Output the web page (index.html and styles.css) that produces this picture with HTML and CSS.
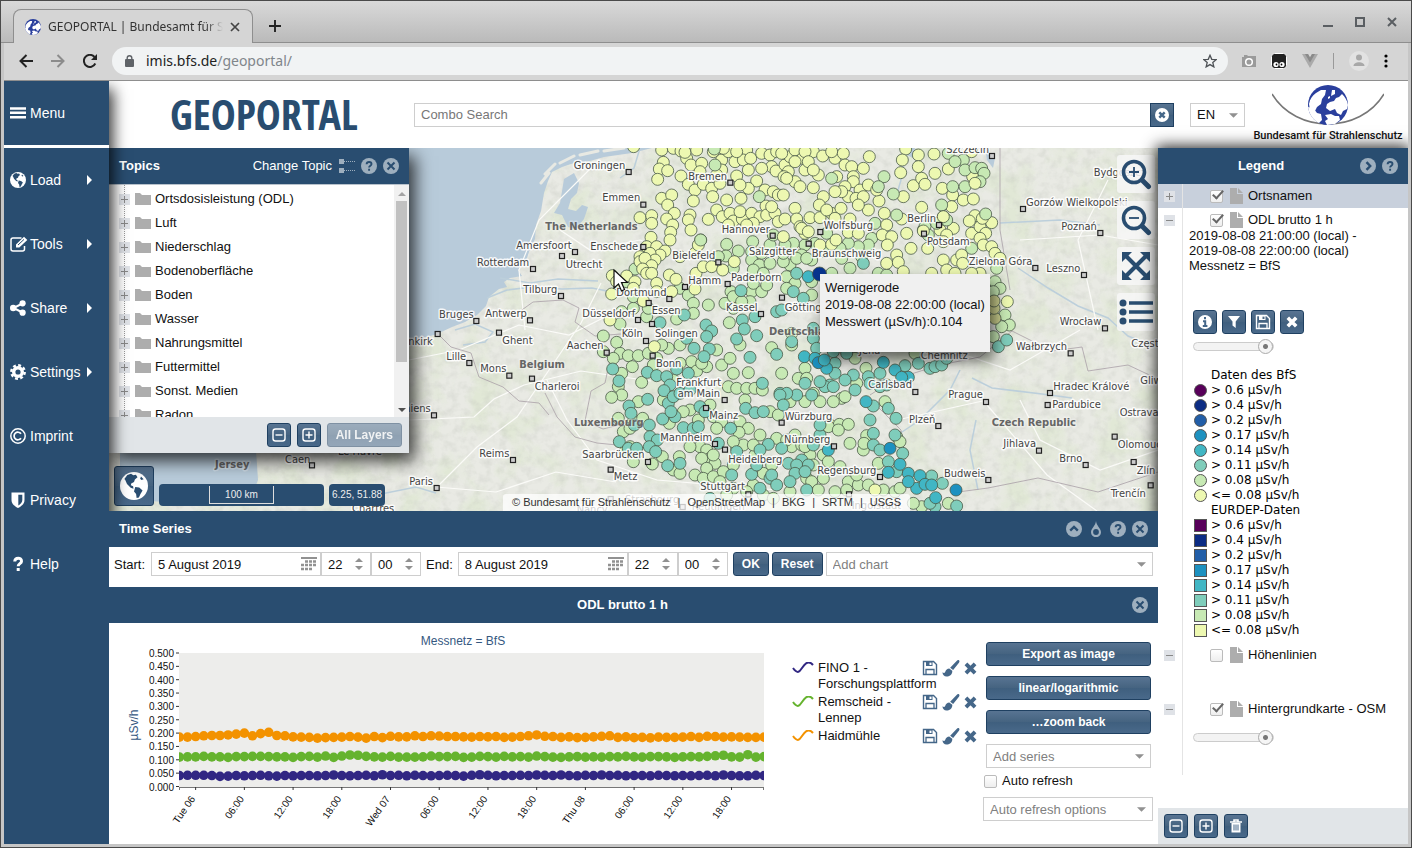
FILE: index.html
```html
<!DOCTYPE html>
<html lang="en">
<head>
<meta charset="utf-8">
<title>GEOPORTAL | Bundesamt für Strahlenschutz</title>
<link rel="stylesheet" href="styles.css">
</head>
<body>
<svg class="defs" aria-hidden="true">
  <symbol id="i-close" viewBox="0 0 16 16"><circle cx="8" cy="8" r="8" fill="#9eafbe"/><path d="M4.500 4.500l7 7M11.500 4.500l-7 7" stroke="#294d70" stroke-width="2"/></symbol>
  <symbol id="i-help" viewBox="0 0 16 16"><circle cx="8" cy="8" r="8" fill="#9eafbe"/><path d="M5.600 6.200c.2-3 4.900-2.800 4.900-.2 0 1.700-2.400 1.700-2.400 3.600M8.100 10.800v2" fill="none" stroke="#294d70" stroke-width="1.900"/></symbol>
  <symbol id="i-right" viewBox="0 0 16 16"><circle cx="8" cy="8" r="8" fill="#9eafbe"/><path d="M6.500 4.200L10.200 8l-3.700 3.800" fill="none" stroke="#294d70" stroke-width="2.400"/></symbol>
  <symbol id="i-up" viewBox="0 0 16 16"><circle cx="8" cy="8" r="8" fill="#9eafbe"/><path d="M4.200 9.600L8 6l3.800 3.600" fill="none" stroke="#294d70" stroke-width="2.400"/></symbol>
  <symbol id="i-drop" viewBox="0 0 16 16"><path d="M8 0C7.700 4.500 3 7.500 3 11.200a5 5 0 0 0 10 0C13 7.500 8.300 4.500 8 0z" fill="#9eafbe"/><circle cx="8" cy="11" r="2.900" fill="#294d70"/></symbol>
  <symbol id="i-minus" viewBox="0 0 16 16"><rect x="2" y="2" width="12" height="12" rx="2.500" fill="none" stroke="currentColor" stroke-width="1.400"/><path d="M4.500 8h7" stroke="currentColor" stroke-width="1.400"/></symbol>
  <symbol id="i-plus" viewBox="0 0 16 16"><rect x="2" y="2" width="12" height="12" rx="2.500" fill="none" stroke="currentColor" stroke-width="1.400"/><path d="M4.500 8h7M8 4.500v7" stroke="currentColor" stroke-width="1.400"/></symbol>
  <symbol id="i-save" viewBox="0 0 16 16"><path d="M1.500 1.500h10l3 3v10h-13z" fill="none" stroke="currentColor" stroke-width="1.400"/><path d="M4 1.500h6.500V6H4zM7.500 2.500v2.500h2V2.500z" fill="currentColor" fill-rule="evenodd"/><path d="M4 14.500v-5h8v5" fill="none" stroke="currentColor" stroke-width="1.300"/></symbol>
  <symbol id="i-brush" viewBox="0 0 16 16"><path d="M15.500.3c.7.600.5 1.400 0 2.200L10 9.300 7.200 7.200 13.300.9c.7-.7 1.500-1.100 2.200-.6zM6.400 8l2.800 2.200c.3 3.500-2.600 5.400-5.400 5.400C1.500 15.600 0 14 0 11.600c1.200.8 2 .8 2.500-.4C3.200 9.300 4.500 8 6.400 8z" fill="currentColor"/></symbol>
  <symbol id="i-x" viewBox="0 0 12 12"><path d="M1.800 1.800l8.400 8.400M10.200 1.800l-8.400 8.400" stroke="currentColor" stroke-width="3.600"/></symbol>
  <symbol id="i-globe" viewBox="0 0 16 16"><circle cx="8" cy="8" r="8" fill="#fff"/><path d="M4.200 1.700L6.300 1l1.300.8 1.500-.3.9 1.500-1.500 1.300-.5 1.400-1.600.8-.2 1.100 1.300.6.2 1.300-1.600-.5L4 6.800 3 4.600 2.500 4zM8.700 8.600l2.300.3 1.900 1.700-1.200 2-.9 2-1.300.3-.3-2.300-1.200-1.500zM12 2.500l1.500 1.600-1.200.5-.8-.8z" fill="#294d70"/></symbol>
  <symbol id="i-folder" viewBox="0 0 16 12"><path d="M0 0h5l2 2h9v10H0z" fill="#adadad"/></symbol>
  <symbol id="i-file" viewBox="0 0 13 16"><path d="M0 0h7v6h6v10H0z" fill="#adadad"/><path d="M8 0l5 5H8z" fill="#adadad"/></symbol>
  <symbol id="i-down" viewBox="0 0 8 4"><path d="M0 0h8L4 4z" fill="#919191"/></symbol>
  <symbol id="i-spin" viewBox="0 0 8 14"><path d="M0 5l4-4 4 4zM0 9h8l-4 4z" fill="#919191"/></symbol>
  <symbol id="i-cal" viewBox="0 0 16 14"><path d="M0 0h16v2H0z" fill="#919191"/><path d="M4 4.500h12M0 8h16M0 12h12" stroke="#919191" stroke-width="2.600" stroke-dasharray="3 1"/></symbol>
  <symbol id="i-arrow" viewBox="0 0 5 10"><path d="M0 0l5 5-5 5z" fill="#fff"/></symbol>
  <symbol id="i-bfs" viewBox="0 0 40 40"><circle cx="20" cy="20" r="20" fill="#2a3f9d"/><path d="M8 8l5-3 5 0-1 5-3 4-1 5-4 3-2 4-5-1-1-6c1-5 3-8 7-11zM0 22l6 2 3 4 4 1 1 6-3 3C5 35 1 29 0 22zM22 17l4-1 2-3 3-1 3-3c3 3 5 6 6 11l-1 4-4 2-2 4-4-2-2-4-5 2-4-3 1-4zM17 30l6-1 4 2 4 0 1 4-5 4-8 1-2-4 3-2zM24 5l3 0 0 4-4 2zM20 12l2-1 0 2-2 1z" fill="#fff"/></symbol>
</svg>

<div class="window">
  <div class="tabstrip">
    <div class="tab">
      <svg class="favicon"><use href="#i-bfs"/></svg>
      <span class="tab-title">GEOPORTAL | Bundesamt für Strahlenschutz</span>
      <button class="plain" aria-label="Close tab"><svg width="10" height="10" viewBox="0 0 10 10"><path d="M1 1l8 8M9 1L1 9" stroke="#444" stroke-width="1.700"/></svg></button>
    </div>
    <button class="plain new-tab" aria-label="New tab"><svg width="12" height="12" viewBox="0 0 12 12"><path d="M6 0v12M0 6h12" stroke="#222" stroke-width="1.900"/></svg></button>
    <div class="win-controls">
      <button class="plain" aria-label="Minimize"><svg width="10" height="10" viewBox="0 0 10 10"><path d="M0 9h10" stroke="#5a5e62" stroke-width="2"/></svg></button>
      <button class="plain" aria-label="Maximize"><svg width="10" height="10" viewBox="0 0 10 10"><rect x="1" y="1" width="8" height="8" fill="none" stroke="#5a5e62" stroke-width="2"/></svg></button>
      <button class="plain" aria-label="Close window"><svg width="10" height="10" viewBox="0 0 10 10"><path d="M1 1l8 8M9 1L1 9" stroke="#5a5e62" stroke-width="2"/></svg></button>
    </div>
  </div>
  <div class="navbar">
    <button class="plain" aria-label="Back"><svg width="14" height="14" viewBox="0 0 14 14"><path d="M14 7H1.500M7.500 1L1.500 7l6 6" fill="none" stroke="#222" stroke-width="2"/></svg></button>
    <button class="plain" aria-label="Forward"><svg width="14" height="14" viewBox="0 0 14 14"><path d="M0 7h12.500M6.500 1l6 6-6 6" fill="none" stroke="#8c8c8c" stroke-width="2"/></svg></button>
    <button class="plain" aria-label="Reload"><svg width="14" height="14" viewBox="0 0 14 14"><path d="M12.300 9.500A6 6 0 1 1 11.500 3" fill="none" stroke="#222" stroke-width="2"/><path d="M14 0v6H8z" fill="#222"/></svg></button>
    <div class="omnibox">
      <svg width="9" height="12" viewBox="0 0 9 12"><rect y="4" width="9" height="8" rx="1" fill="#5f6368"/><path d="M2.200 5V3a2.300 2.300 0 0 1 4.600 0v2" fill="none" stroke="#5f6368" stroke-width="1.400"/></svg>
      <span class="url">imis.bfs.de<span class="path">/geoportal/</span></span>
      <svg width="14" height="14" viewBox="0 0 16 16"><path d="M8 1.500l2 4.600 5 .4-3.800 3.300 1.200 4.900L8 12.100l-4.400 2.600 1.200-4.900L1 6.500l5-.4z" fill="none" stroke="#4d5156" stroke-width="1.500"/></svg>
    </div>
    <div class="extensions">
      <svg width="14" height="14" viewBox="0 0 14 14"><path d="M0 3h2V1h3l1 1h8v11H0z" fill="#9a9a9a"/><circle cx="7" cy="8" r="3.300" fill="none" stroke="#fff" stroke-width="1.500"/></svg>
      <svg width="16" height="16" viewBox="0 0 16 16"><rect x=".5" y=".5" width="15" height="15" rx="3" fill="#222" stroke="#fff"/><circle cx="5" cy="11.500" r="2.600" fill="#fff"/><circle cx="11" cy="11.500" r="2.600" fill="#fff"/><circle cx="5.500" cy="11.500" r=".9"/><circle cx="10.500" cy="11.500" r=".9"/></svg>
      <svg width="16" height="14" viewBox="0 0 16 14"><path d="M0 0h6l2 3.500L10 0h6L8 14z" fill="#aaa"/><path d="M3 0h3l2 3.500L10 0h3L8 8.500z" fill="#8a8a8a"/></svg>
      <span class="rule"></span>
      <svg width="20" height="20" viewBox="0 0 20 20"><circle cx="10" cy="10" r="10" fill="#e2e2e2"/><circle cx="10" cy="6.500" r="3" fill="#a8a8a8"/><path d="M4.500 15c0-5 11-5 11 0z" fill="#a8a8a8"/></svg>
      <button class="plain" aria-label="Browser menu"><svg width="4" height="14" viewBox="0 0 4 14"><circle cx="2" cy="2" r="1.600"/><circle cx="2" cy="7" r="1.600"/><circle cx="2" cy="12" r="1.600"/></svg></button>
    </div>
  </div>

  <div class="app">
    <nav class="sidebar">
      <button class="nav-item menu"><svg width="16" height="16" viewBox="0 0 16 16"><path d="M0 3.500h16M0 7.800h16M0 12.200h16" stroke="#fff" stroke-width="2.600"/></svg><span>Menu</span></button>
      <button class="nav-item"><svg width="16" height="16"><use href="#i-globe"/></svg><span>Load</span><svg class="sub"><use href="#i-arrow"/></svg></button>
      <button class="nav-item"><svg class="over" width="18" height="16" viewBox="0 0 18 16"><path d="M11.500 2H3a2 2 0 0 0-2 2v9a2 2 0 0 0 2 2h9.500a2 2 0 0 0 2-2v-3" fill="none" stroke="#fff" stroke-width="1.500"/><path d="M6 8.500L14 .8 17.300 4l-8 7.500H6z" fill="#fff"/><path d="M8 9l6-5.600" stroke="#294d70"/></svg><span>Tools</span><svg class="sub"><use href="#i-arrow"/></svg></button>
      <button class="nav-item"><svg width="16" height="16" viewBox="0 0 16 16"><path d="M12.500 3.500L3.500 8l9 4.500" fill="none" stroke="#fff" stroke-width="2"/><circle cx="12.600" cy="3.300" r="3.100" fill="#fff"/><circle cx="3.200" cy="8" r="3.200" fill="#fff"/><circle cx="12.600" cy="12.700" r="3.100" fill="#fff"/></svg><span>Share</span><svg class="sub"><use href="#i-arrow"/></svg></button>
      <button class="nav-item"><svg width="16" height="16" viewBox="0 0 16 16"><circle cx="8" cy="8" r="4.300" fill="none" stroke="#fff" stroke-width="3.400"/><circle cx="8" cy="8" r="6.700" fill="none" stroke="#fff" stroke-width="2.400" stroke-dasharray="2.900 2.360"/></svg><span>Settings</span><svg class="sub"><use href="#i-arrow"/></svg></button>
      <button class="nav-item"><svg width="16" height="16" viewBox="0 0 16 16"><circle cx="8" cy="8" r="7.200" fill="none" stroke="#fff" stroke-width="1.500"/><path d="M11 5.800A3.800 3.800 0 1 0 11 10.200" fill="none" stroke="#fff" stroke-width="1.700"/></svg><span>Imprint</span></button>
      <button class="nav-item"><svg width="16" height="16" viewBox="0 0 16 16"><path d="M1.500.5h13v7.500c0 4-3.500 6.500-6.500 8-3-1.500-6.500-4-6.500-8z" fill="#fff"/><path d="M8.300 2.700h4V8c0 2.500-2 4.300-4 5.400z" fill="#294d70"/></svg><span>Privacy</span></button>
      <button class="nav-item"><svg width="16" height="16" viewBox="0 0 16 16"><path d="M4.700 5.500C5 .9 11.600 1.200 11.500 5.200c0 2.500-3.300 2.400-3.300 5M8.200 12v3" fill="none" stroke="#fff" stroke-width="3"/></svg><span>Help</span></button>
    </nav>

    <header class="banner">
      <h1>GEOPORTAL</h1>
      <form class="search">
        <input type="text" placeholder="Combo Search" aria-label="Combo Search">
        <button type="button" class="btn square" aria-label="Clear search"><svg width="16" height="16" viewBox="0 0 16 16"><circle cx="8" cy="8" r="7" fill="#fff"/><path d="M5.300 5.300l5.400 5.400M10.700 5.300l-5.400 5.400" stroke="#456789" stroke-width="2.400"/></svg></button>
      </form>
      <div class="combo lang"><select aria-label="Language"><option>EN</option><option>DE</option></select><svg><use href="#i-down"/></svg></div>
      <div class="bfs">
        <svg width="112" height="42" viewBox="0 0 112 42"><path d="M0 9C24 49 88 49 112 9" fill="none" stroke="#777" stroke-width="1.500"/><use href="#i-bfs" x="36" y="0" width="40" height="40"/></svg>
        <p>Bundesamt für Strahlenschutz</p>
      </div>
    </header>

    <section class="map" aria-label="Map">
      <svg class="map-canvas" viewBox="109 148 1049 363" preserveAspectRatio="xMinYMin slice">
        <defs>
          <filter id="cover" x="0" y="0" width="100%" height="100%"><feTurbulence type="fractalNoise" baseFrequency=".03" numOctaves="5" seed="8"/><feColorMatrix values="0 0 0 0 .72  0 0 0 0 .8  0 0 0 0 .62  0 3.500 0 0 -1.500"/></filter>
          <filter id="relief" x="0" y="0" width="100%" height="100%"><feTurbulence type="fractalNoise" baseFrequency=".12" numOctaves="3" seed="3"/><feColorMatrix values="0 0 0 0 .55  0 0 0 0 .57  0 0 0 0 .52  0 2 0 0 -.85"/></filter>
        </defs>
        <rect x="109" y="148" width="1049" height="363" fill="#e9eae4"/>
        <rect x="109" y="148" width="1049" height="363" filter="url(#cover)" opacity=".6"/>
        <rect x="109" y="148" width="1049" height="363" filter="url(#relief)" opacity=".4"/>
        <g class="sea">
          <path d="M109 148H652l-20 5-28 4-14 4-16 2-12 4-10 5-4 9-4 12-3 18-5 14-1 14-5 10-4 12-8 9 4 6-12 2-6 4 3 5-8 2-10 8-3 9-9 9-12 7-13 5-15 7-14 4-20 6H109z"/>
          <path d="M574 173l5 10-2 10-6 6-3 10 8 2 6-6 6 2-4 12-8 10-8-2-6-12-8-2 6-10 2-12 2-12z"/>
          <path d="M120 450h136l2 30-8 20-40 5-60-4-30-6z"/>
          <path d="M985 148l10 10-2 10-6-8zM905 148h10l-2 10-8-4z"/>
        </g>
        <g class="islands"><path d="M545 174l10-10M560 163l14-7M580 155l18-4M604 151l20-3M541 183l8-10"/></g>
        <g class="rivers"><path d="M487 298l20-8 25-3 30 2 30-1 20 4M500 278l30 5 28-4 40 2M640 148l-6 20-14 10M455 330l20-6 18 8-8 10-22 3M905 150l-4 30-6 20M976 420l-6 30 8 40M960 370l-10 20-30 30-30 20M1158 348l-30-12-20-18-30-12-30-18-30-20M1100 225l-40-5-60 3M436 493l-20-6-40 8M1072 398l-30-4-50-6-20-10"/></g>
        <g class="roads"><path d="M409 420l65-3 20-18 30-14 57-14 70 10M437 487l40-40 40-30 30-44 34-50 20-40M409 360l50-10 60-25 50 10 60-30M547 380l20 40 30 40 60 20 120 10M560 230l30 20 50-10 50 20M436 487l60 5 60-20 60 10M525 330l-6-60 20-50 60-60M1020 240l80-5 58 10M1020 400l20 40 60 30 58-20M987 400l-90 20M987 405l60 70 50 36M1080 330l-70 40-60-20M1108 180l-30 60 20 90"/></g>
        <g class="borders"><path d="M519 312l14-10 30-2 16 8-4 14 20 14 26-2M437 333l14 14 20 6 8 24 24 10 16 14 20 2 10 12M611 355l-6 28-14 8-6 30 18 8 20-5M545 393l12 24 18 20 22 6 20 2M870 395l25-16 45-14 40-8 32-26M905 460l-4-30-30-30M958 492l30-4 50-10 60 14 60-20M1012 331l40 20 30-4 6 24 40-6 30 14M1010 290l-10-60 0-82"/></g>
        <g id="stations"></g>
        <g id="places"></g>
        <path d="M614 270v18l4.500-4 3 7 3-1.500-3-7h6z" fill="#fff" stroke="#111" stroke-width="1.200"/>
      </svg>

      <div class="map-tools">
        <button aria-label="Zoom in"><svg width="32" height="32" viewBox="0 0 32 32"><circle cx="14" cy="14" r="10.500" fill="none" stroke="#294d70" stroke-width="3.600"/><path d="M22 22l6.500 6.500" stroke="#294d70" stroke-width="5" stroke-linecap="round"/><path d="M9 14h10M14 9v10" stroke="#294d70" stroke-width="1.800"/></svg></button>
        <button aria-label="Zoom out"><svg width="32" height="32" viewBox="0 0 32 32"><circle cx="14" cy="14" r="10.500" fill="none" stroke="#294d70" stroke-width="3.600"/><path d="M22 22l6.500 6.500" stroke="#294d70" stroke-width="5" stroke-linecap="round"/><path d="M9 14h10" stroke="#294d70" stroke-width="1.800"/></svg></button>
        <button aria-label="Full extent"><svg width="32" height="32" viewBox="0 0 32 32"><path d="M6 6l20 20M26 6L6 26" stroke="#294d70" stroke-width="4"/><path d="M2 2h10L2 12zM30 2v10L20 2zM2 30V20l10 10zM30 30H20l10-10z" fill="#294d70"/></svg></button>
        <button aria-label="Legend"><svg width="34" height="32" viewBox="0 0 34 32"><path d="M10 7h24M10 16h24M10 25h24" stroke="#294d70" stroke-width="3.600"/><circle cx="4" cy="7" r="3.500" fill="#294d70"/><circle cx="4" cy="16" r="3.500" fill="#294d70"/><circle cx="4" cy="25" r="3.500" fill="#294d70"/></svg></button>
      </div>

      <div class="tooltip" role="tooltip">Wernigerode<br>2019-08-08 22:00:00 (local)<br>Messwert (µSv/h):0.104</div>
      <div class="attribution"><span>© Bundesamt für Strahlenschutz</span><span>|</span><span>OpenStreetMap</span><span>|</span><span>BKG</span><span>|</span><span>SRTM</span><span>|</span><span>USGS</span></div>
      <div class="map-status">
        <button class="btn globe-btn" aria-label="Whole world"><svg width="28" height="28"><use href="#i-globe"/></svg></button>
        <div class="chip scale"><span>100 km</span></div>
        <div class="chip">6.25, 51.88</div>
      </div>

      <section class="topics">
        <div class="panel-head">
          <h2>Topics</h2>
          <span class="change">Change Topic</span>
          <svg width="16" height="14" viewBox="0 0 16 14"><path d="M0 0h5v5H0zM0 9h5v5H0z" fill="#9eafbe"/><path d="M5 2.500h11M5 11.500h11" stroke="#9eafbe" stroke-dasharray="1 1"/></svg>
          <button class="plain tool" aria-label="Help"><svg><use href="#i-help"/></svg></button>
          <button class="plain tool" aria-label="Close"><svg><use href="#i-close"/></svg></button>
        </div>
        <div class="tree-wrap">
          <ul class="tree">
            <li><i></i><svg><use href="#i-folder"/></svg>Ortsdosisleistung (ODL)</li>
            <li><i></i><svg><use href="#i-folder"/></svg>Luft</li>
            <li><i></i><svg><use href="#i-folder"/></svg>Niederschlag</li>
            <li><i></i><svg><use href="#i-folder"/></svg>Bodenoberfläche</li>
            <li><i></i><svg><use href="#i-folder"/></svg>Boden</li>
            <li><i></i><svg><use href="#i-folder"/></svg>Wasser</li>
            <li><i></i><svg><use href="#i-folder"/></svg>Nahrungsmittel</li>
            <li><i></i><svg><use href="#i-folder"/></svg>Futtermittel</li>
            <li><i></i><svg><use href="#i-folder"/></svg>Sonst. Medien</li>
            <li><i></i><svg><use href="#i-folder"/></svg>Radon</li>
          </ul>
          <div class="scroll"><svg width="8" height="4" viewBox="0 0 8 4"><path d="M0 4h8L4 0z" fill="#a3a3a3"/></svg><b></b><svg width="8" height="4" viewBox="0 0 8 4"><path d="M0 0h8L4 4z" fill="#505050"/></svg></div>
        </div>
        <div class="panel-foot right">
          <button class="btn square" aria-label="Collapse all"><svg width="16" height="16"><use href="#i-minus"/></svg></button>
          <button class="btn square" aria-label="Expand all"><svg width="16" height="16"><use href="#i-plus"/></svg></button>
          <button class="btn" disabled>All Layers</button>
        </div>
      </section>
    </section>

    <section class="series">
      <div class="panel-head">
        <h2>Time Series</h2>
        <button class="plain tool" aria-label="Collapse"><svg><use href="#i-up"/></svg></button>
        <button class="plain tool" aria-label="Opacity"><svg><use href="#i-drop"/></svg></button>
        <button class="plain tool" aria-label="Help"><svg><use href="#i-help"/></svg></button>
        <button class="plain tool" aria-label="Close"><svg><use href="#i-close"/></svg></button>
      </div>
      <div class="range">
        <label for="start">Start:</label>
        <div class="fields">
          <div class="field date"><input id="start" type="text" value="5 August 2019"><svg width="16" height="14"><use href="#i-cal"/></svg></div>
          <div class="field num"><input type="text" value="22" aria-label="Start hour"><svg width="8" height="14"><use href="#i-spin"/></svg></div>
          <div class="field num"><input type="text" value="00" aria-label="Start minute"><svg width="8" height="14"><use href="#i-spin"/></svg></div>
        </div>
        <label for="end">End:</label>
        <div class="fields">
          <div class="field date"><input id="end" type="text" value="8 August 2019"><svg width="16" height="14"><use href="#i-cal"/></svg></div>
          <div class="field num"><input type="text" value="22" aria-label="End hour"><svg width="8" height="14"><use href="#i-spin"/></svg></div>
          <div class="field num"><input type="text" value="00" aria-label="End minute"><svg width="8" height="14"><use href="#i-spin"/></svg></div>
        </div>
        <button class="btn">OK</button>
        <button class="btn">Reset</button>
        <div class="combo hint grow"><select aria-label="Add chart"><option>Add chart</option></select><svg><use href="#i-down"/></svg></div>
      </div>
      <div class="panel-head centered">
        <h2>ODL brutto 1 h</h2>
        <button class="plain tool" aria-label="Close chart"><svg><use href="#i-close"/></svg></button>
      </div>
      <div class="chart-row">
        <svg class="chart" id="chart" viewBox="109 623 675 217" role="img" aria-label="Messnetz = BfS"></svg>
        <ul class="keys">
          <li><svg class="wave" viewBox="0 0 22 12"><path d="M1 6c5 7 7 3 9 0s6-9 11-3" fill="none" stroke="#312783" stroke-width="2"/></svg><span>FINO 1 - Forschungsplattform</span><button class="plain" aria-label="Save"><svg width="16" height="16"><use href="#i-save"/></svg></button><button class="plain" aria-label="Edit style"><svg width="18" height="17"><use href="#i-brush"/></svg></button><button class="plain" aria-label="Remove"><svg width="13" height="13"><use href="#i-x"/></svg></button></li>
          <li><svg class="wave" viewBox="0 0 22 12"><path d="M1 6c5 7 7 3 9 0s6-9 11-3" fill="none" stroke="#65b32e" stroke-width="2"/></svg><span>Remscheid - Lennep</span><button class="plain" aria-label="Save"><svg width="16" height="16"><use href="#i-save"/></svg></button><button class="plain" aria-label="Edit style"><svg width="18" height="17"><use href="#i-brush"/></svg></button><button class="plain" aria-label="Remove"><svg width="13" height="13"><use href="#i-x"/></svg></button></li>
          <li><svg class="wave" viewBox="0 0 22 12"><path d="M1 6c5 7 7 3 9 0s6-9 11-3" fill="none" stroke="#f39200" stroke-width="2"/></svg><span>Haidmühle</span><button class="plain" aria-label="Save"><svg width="16" height="16"><use href="#i-save"/></svg></button><button class="plain" aria-label="Edit style"><svg width="18" height="17"><use href="#i-brush"/></svg></button><button class="plain" aria-label="Remove"><svg width="13" height="13"><use href="#i-x"/></svg></button></li>
        </ul>
        <div class="actions">
          <button class="btn">Export as image</button>
          <button class="btn">linear/logarithmic</button>
          <button class="btn">…zoom back</button>
          <div class="combo hint"><select aria-label="Add series"><option>Add series</option></select><svg><use href="#i-down"/></svg></div>
          <label class="check"><input type="checkbox"> Auto refresh</label>
          <div class="combo hint wide"><select aria-label="Auto refresh options"><option>Auto refresh options</option></select><svg><use href="#i-down"/></svg></div>
        </div>
      </div>
    </section>

    <aside class="legend">
      <div class="panel-head centered">
        <h2>Legend</h2>
        <button class="plain tool" aria-label="Collapse"><svg><use href="#i-right"/></svg></button>
        <button class="plain tool" aria-label="Help"><svg><use href="#i-help"/></svg></button>
      </div>
      <div class="layers">
        <div class="layer selected"><i class="plus"></i><label><input type="checkbox" checked><svg><use href="#i-file"/></svg>Ortsnamen</label></div>
        <div class="layer"><i></i><label><input type="checkbox" checked><svg><use href="#i-file"/></svg>ODL brutto 1 h</label></div>
        <div class="details">
          <p>2019-08-08 21:00:00 (local) - 2019-08-08 22:00:00 (local)<br>Messnetz = BfS</p>
          <div class="layer-buttons">
            <button class="btn square" aria-label="Info"><svg width="16" height="16" viewBox="0 0 16 16"><circle cx="8" cy="8" r="7" fill="#fff"/><path d="M8 3v2.200M6 7.200h2.200V12M5.800 12h4.600" fill="none" stroke="#456789" stroke-width="2"/></svg></button>
            <button class="btn square" aria-label="Filter"><svg width="16" height="16" viewBox="0 0 16 16"><path d="M2 2h12L9.700 7.500V14L6.500 11.500v-4z" fill="#fff"/></svg></button>
            <button class="btn square" aria-label="Download"><svg width="16" height="16"><use href="#i-save"/></svg></button>
            <button class="btn square" aria-label="Remove layer"><svg width="12" height="12"><use href="#i-x"/></svg></button>
          </div>
          <input class="slider" type="range" value="100" aria-label="Opacity of ODL brutto 1 h">
          <ul class="classes">
            <li><span></span>Daten des BfS</li>
            <li><span class="dot c1"></span>&gt; 0.6 µSv/h</li>
            <li><span class="dot c2"></span>&gt; 0.4 µSv/h</li>
            <li><span class="dot c3"></span>&gt; 0.2 µSv/h</li>
            <li><span class="dot c4"></span>&gt; 0.17 µSv/h</li>
            <li><span class="dot c5"></span>&gt; 0.14 µSv/h</li>
            <li><span class="dot c6"></span>&gt; 0.11 µSv/h</li>
            <li><span class="dot c7"></span>&gt; 0.08 µSv/h</li>
            <li><span class="dot c8"></span>&lt;= 0.08 µSv/h</li>
            <li><span></span>EURDEP-Daten</li>
            <li><span class="box c1"></span>&gt; 0.6 µSv/h</li>
            <li><span class="box c2"></span>&gt; 0.4 µSv/h</li>
            <li><span class="box c3"></span>&gt; 0.2 µSv/h</li>
            <li><span class="box c4"></span>&gt; 0.17 µSv/h</li>
            <li><span class="box c5"></span>&gt; 0.14 µSv/h</li>
            <li><span class="box c6"></span>&gt; 0.11 µSv/h</li>
            <li><span class="box c7"></span>&gt; 0.08 µSv/h</li>
            <li><span class="box c8"></span>&lt;= 0.08 µSv/h</li>
          </ul>
        </div>
        <div class="layer spaced"><i></i><label><input type="checkbox"><svg><use href="#i-file"/></svg>Höhenlinien</label></div>
        <div class="layer"><i></i><label><input type="checkbox" checked><svg><use href="#i-file"/></svg>Hintergrundkarte - OSM</label></div>
        <div class="details last"><input class="slider" type="range" value="100" aria-label="Opacity of Hintergrundkarte"></div>
      </div>
      <div class="panel-foot">
        <button class="btn square" aria-label="Collapse all"><svg width="16" height="16"><use href="#i-minus"/></svg></button>
        <button class="btn square" aria-label="Expand all"><svg width="16" height="16"><use href="#i-plus"/></svg></button>
        <button class="btn square" aria-label="Remove all"><svg width="16" height="16" viewBox="0 0 16 16"><path d="M2 4h12M6 3.500V2h4v1.500" fill="none" stroke="#fff" stroke-width="1.600"/><path d="M3.500 5h9v9.500h-9z" fill="#fff"/><path d="M6 6.500v6M8 6.500v6M10 6.500v6" stroke="#456789"/></svg></button>
      </div>
    </aside>
  </div>
</div>
<script src="app.js"></script>
</body>
</html>
```
FILE: styles.css
```css
* { box-sizing: border-box; }
body { margin: 0; font: 13px/16px "Liberation Sans", Arial, sans-serif; color: #111; background: #4a4a4a; }
button, input, select { font: inherit; color: inherit; margin: 0; }
h1, h2, p, ul { margin: 0; padding: 0; }
ul { list-style: none; }
svg { display: block; flex: none; }
.defs { position: absolute; width: 0; height: 0; }
.plain { border: 0; padding: 0; background: none; display: block; flex: none; }

/* browser window */
.window { min-height: 100vh; display: flex; flex-direction: column; border: 1px solid #4a4a4a; background: #c6c6c6; }
.tabstrip { display: flex; align-items: center; height: 42px; padding: 0 10px 0 12px; background: linear-gradient(#d9d9d9, #bababa); border-bottom: 1px solid #8e8e8e; }
.tab { display: flex; align-items: center; align-self: flex-end; gap: 7px; width: 240px; height: 34px; margin-bottom: -1px; padding: 0 12px 0 11px; background: #d5d5d5; border: 1px solid #8e8e8e; border-bottom: 0; border-radius: 8px 8px 0 0; }
.favicon { width: 16px; height: 16px; }
.tab-title { flex: 1; overflow: hidden; white-space: nowrap; font: 12px/18px "Noto Sans", sans-serif; color: #333; -webkit-mask-image: linear-gradient(90deg, #000 90%, transparent); mask-image: linear-gradient(90deg, #000 90%, transparent); }
.new-tab { margin: 8px 0 0 16px; }
.win-controls { display: flex; gap: 22px; margin-left: auto; padding: 0 4px 0 0; }
.navbar { display: flex; align-items: center; gap: 18px; height: 38px; margin: 0 3px; padding: 0 20px 2px 15px; background: #d5d5d5; border-bottom: 1px solid #8e8e8e; }
.omnibox { flex: 1; display: flex; align-items: center; gap: 12px; height: 28px; margin-left: -3px; padding: 0 11px 0 13px; border-radius: 14px; background: #f1f3f4; font: 14px/20px "Noto Sans", sans-serif; color: #222; }
.extensions { display: flex; align-items: center; gap: 15px; margin-left: -4px; }
.url { flex: 1; }
.path { color: #80868b; }
.rule { width: 1px; height: 16px; background: #999; }

/* application frame */
.app { flex: 1; display: grid; grid-template: auto 1fr auto / 105px minmax(0, 1fr) 250px; margin: 0 3px 3px; background: #fff; overflow: hidden; }
.sidebar { grid-row: 1 / 4; position: relative; z-index: 3; background: #294d70; box-shadow: 4px 8px 14px rgba(0, 0, 0, .8); }
.nav-item { display: flex; align-items: center; width: 100%; height: 64px; padding: 0 17px 0 6px; border: 0; background: none; color: #fff; font-size: 14px; text-align: left; }
.nav-item.menu { height: 67px; border-bottom: 3px solid #fff; }
.nav-item span { flex: 1; }
.nav-item > svg:first-child { margin-right: 4px; }
.nav-item > svg.over { margin-right: 2px; }
.nav-item .sub { width: 5px; height: 10px; }

.banner { grid-column: 2 / 4; display: flex; align-items: center; height: 67px; padding: 0 7px 0 61px; }
h1 { width: 244px; padding-bottom: 2px; font: bold 42px/60px "Open Sans Condensed", "Noto Sans Condensed", "Roboto Condensed", "Open Sans", sans-serif; color: #294d70; }
.search { flex: 1; display: flex; }
.search input { flex: 1; height: 24px; padding: 0 6px; border: 1px solid #cecece; border-right: 0; }
.search input::placeholder { color: #777; opacity: 1; }
.lang { width: 55px; margin: 0 10px 0 16px; }
.bfs { width: 146px; height: 60px; display: flex; flex-direction: column; align-items: center; }
.bfs p { margin-top: 2px; font: 500 11px/14px Roboto, sans-serif; color: #111; white-space: nowrap; }

/* buttons and fields */
.btn { height: 24px; padding: 0 8px; display: flex; align-items: center; justify-content: center; border: 1px solid #1f4061; border-radius: 3px; background: linear-gradient(#587492, #456380 50%, #3f5f7e 51%, #49698a); color: #fff; font-weight: bold; font-size: 12px; line-height: 16px; white-space: nowrap; flex: none; }
.btn:disabled { opacity: .5; }
.btn.square { width: 24px; padding: 0; }
.search .btn { border-radius: 0; }
.combo { position: relative; }
.combo select { width: 100%; height: 24px; padding: 1px 20px 0 6px; border: 1px solid #cecece; border-radius: 0; background: #fff; appearance: none; display: block; }
.combo svg { position: absolute; right: 7px; top: 10px; width: 9px; height: 5px; pointer-events: none; }
.hint select { color: #808080; }
.grow { flex: 1; }
.fields { display: flex; }
.field { display: flex; align-items: center; height: 24px; border: 1px solid #cecece; padding-right: 7px; background: #fff; }
.field input { flex: 1; min-width: 0; border: 0; padding: 1px 0 0 6px; outline: 0; background: none; }
.date { width: 170px; padding-right: 3px; }
.num { width: 50px; }
input[type="checkbox"] { appearance: none; position: relative; width: 13px; height: 13px; flex: none; border: 1px solid #bbb; border-radius: 2px; background: linear-gradient(#fff, #eee); }
input[type="checkbox"]:checked::after { content: ""; position: absolute; left: 4px; top: -3px; width: 4px; height: 9px; border: solid #666; border-width: 0 2px 2px 0; transform: rotate(42deg); }

/* panels */
.panel-head { display: flex; align-items: center; gap: 6px; height: 36px; padding: 0 10px; background: #294d70; color: #fff; }
.panel-head h2 { flex: 1; font-size: 13px; line-height: 16px; }
.centered h2 { text-align: center; }
.tool svg { width: 16px; height: 16px; }
.panel-foot { display: flex; gap: 6px; align-items: center; height: 36px; padding: 0 7px 0 6px; background: #e1e5e8; }
.right { justify-content: flex-end; }

/* map */
.map { grid-column: 2; position: relative; min-height: 305px; overflow: hidden; }
.map-canvas { position: absolute; inset: 0; width: 100%; height: 100%; }
.sea { fill: #b8cbda; }
.islands path { fill: none; stroke: #e8e9e3; stroke-width: 3; stroke-linecap: round; }
.rivers path { fill: none; stroke: #bccfdb; stroke-width: 1.500; }
.roads path { fill: none; stroke: #fbfbf8; stroke-width: 1.200; }
.borders path { fill: none; stroke: #aaa0a8; stroke-width: 1; opacity: .8; }
.station { stroke: #4a5a48; stroke-width: .8; }
.place { font: 11px "DejaVu Sans Condensed", "Noto Sans", sans-serif; fill: #444; stroke: #fff; stroke-opacity: .85; stroke-width: 3; stroke-linejoin: round; paint-order: stroke; }
.country { font-weight: bold; fill: #666; stroke-opacity: .3; }
.town { fill: #ccc; stroke: #222; stroke-width: 1.200; }
.map-tools { position: absolute; top: 7px; right: 3px; display: grid; gap: 8px; }
.map-tools button { width: 38px; height: 38px; padding: 0; display: grid; place-items: center; border: 0; border-radius: 3px; background: rgba(247, 247, 247, .85); }
.tooltip { position: absolute; left: 711px; top: 126px; width: 170px; height: 78px; padding: 5px; line-height: 17px; background: #f0f0f0; box-shadow: 4px 8px 14px rgba(0, 0, 0, .6); white-space: nowrap; }
.attribution { position: absolute; left: 394px; bottom: 0; display: flex; gap: 7px; padding: 0 9px; font-size: 11px; line-height: 17px; color: #333; background: rgba(255, 255, 255, .75); border-radius: 3px 3px 0 0; white-space: nowrap; }
.map-status { position: absolute; left: 5px; bottom: 5px; display: flex; align-items: flex-end; gap: 5px; }
.globe-btn { width: 40px; height: 40px; padding: 0; }
.chip { height: 22px; padding: 0 3px; border-radius: 4px; background: #294d70; color: #eee; font-size: 10px; line-height: 22px; }
.scale { width: 165px; padding: 2px 50px; }
.scale span { display: block; height: 18px; border: 1px solid #ddd; border-top: 0; line-height: 17px; text-align: center; }

.topics { position: absolute; left: 0; top: 0; width: 300px; background: #fff; box-shadow: 6px 8px 16px rgba(0, 0, 0, .75); }
.topics .panel-head { height: 37px; border-bottom: 1px solid #b8c2cc; }
.change { margin-right: 1px; }
.tree-wrap { display: flex; height: 232px; overflow: hidden; }
.tree { flex: 1; padding: 2px 0 0 10px; background: repeating-linear-gradient(#999 0 1px, transparent 1px 2px) 15px 0 / 1px 100% no-repeat; }
.tree li { display: flex; align-items: center; height: 24px; }
.tree li svg { width: 16px; height: 12px; margin: 0 4px 0 5px; }
.tree i, .layer i { flex: none; width: 11px; height: 11px; background: linear-gradient(#888, #888) center / 7px 1px no-repeat, #dfe2e7; }
.tree i, .layer .plus { background: linear-gradient(#888, #888) center / 7px 1px no-repeat, linear-gradient(#888, #888) center / 1px 7px no-repeat, #dfe2e7; }
.scroll { width: 15px; display: flex; flex-direction: column; align-items: center; padding: 7px 0 5px; background: #f1f1f1; }
.scroll b { width: 11px; height: 161px; margin: 5px 0 auto; background: #c1c1c1; }

/* time series */
.series { grid-column: 2; position: relative; z-index: 4; background: #fff; }
.range { display: flex; align-items: center; gap: 5px; height: 40px; padding: 0 5px 6px; }
.range label { padding-top: 1px; }
.range .btn + .btn { margin-left: -2px; }
.range .hint { margin-left: -2px; }
.range label:first-child { margin-right: 1px; }
.chart-row { display: flex; height: 221px; }
.chart { flex: 1; min-width: 0; height: 217px; }
.chart text { font-size: 10px; fill: #111; }
.chart .title { font-size: 12px; fill: #35587f; }
.keys { width: 193px; padding: 37px 0 0 8px; }
.keys li { display: flex; align-items: flex-start; height: 34px; color: #111; }
.keys span { flex: 1; width: 88px; min-width: 0; }
.keys .wave { width: 22px; height: 12px; margin: 2px 4px 0 0; }
.keys .plain { color: #456789; margin-right: 4px; }
.keys .plain:last-child { margin: 2px 0 0; }
.actions { width: 181px; padding: 19px 7px 0 9px; display: flex; flex-direction: column; gap: 10px; }
.check { display: flex; align-items: center; gap: 5px; height: 16px; margin: -5px 0 -2px -2px; }
.wide { margin: 0 -2px 0 -3px; }

/* legend */
.legend { grid-column: 3; grid-row: 2 / 4; position: relative; z-index: 2; display: flex; flex-direction: column; background: #fff; box-shadow: 0 0 14px 2px rgba(0, 0, 0, .85); }
.layers { flex: 1; background: linear-gradient(#e4e4e4, #e4e4e4) 24px 0 / 1px 591px no-repeat; }
.layer { display: flex; align-items: center; height: 24px; padding-left: 6px; }
.layer label { display: flex; align-items: center; margin-left: 35px; }
.layer label svg { width: 13px; height: 16px; margin: 0 5px 0 7px; }
.selected { background: linear-gradient(#e4e4e4, #e4e4e4) 24px 0 / 1px 100% no-repeat, #c8d0dc; }
.spaced { margin-bottom: 30px; }
.details { padding: 0 20px 0 31px; }
.details p { line-height: 15px; margin-top: -4px; }
.layer-buttons { display: flex; gap: 5px; margin: 37px 0 5px 4px; }
.slider { appearance: none; display: block; width: 81px; height: 15px; margin: 0 0 0 4px; background: none; }
.slider::-webkit-slider-runnable-track { height: 9px; border: 1px solid #ccc; border-radius: 5px; background: #f3f3f3; }
.slider::-webkit-slider-thumb { appearance: none; width: 15px; height: 15px; margin-top: -4px; border: 1px solid #aaa; border-radius: 50%; background: radial-gradient(circle, #777 0 2px, #f5f5f5 3px); }
.classes { padding: 14px 0 5px 4px; font: 12px/15px "DejaVu Sans", sans-serif; color: #000; white-space: nowrap; }
.classes li { display: flex; align-items: center; height: 15px; gap: 4px; }
.classes span { flex: none; width: 13px; height: 13px; margin-left: 1px; }
.dot { border-radius: 50%; }
.dot, .box { border: 1px solid #555; }
.c1 { background: #58005a; } .c2 { background: #0c2c84; } .c3 { background: #225ea8; } .c4 { background: #1d91c0; }
.c5 { background: #41b6c4; } .c6 { background: #7fcdbb; } .c7 { background: #c7e9b4; } .c8 { background: #edf8b1; }
.last { padding-top: 9px; }
```
FILE: app.js
```js
const NS = 'http://www.w3.org/2000/svg';
function add(parent, tag, attrs, text) {
  const el = document.createElementNS(NS, tag);
  for (const k in attrs) el.setAttribute(k, attrs[k]);
  if (text !== undefined) el.textContent = text;
  parent.appendChild(el);
  return el;
}

// Map tiles: coordinates inside a tile are given in thirds of a map unit.
const WEST = [400, 145], EAST = [780, 145];
const at = (tile, x, y) => [tile[0] + x / 3, tile[1] + y / 3];

const stations = [
  [WEST, '#c7e9b4', '902,285 980,298 1015,318 978,333 1000,370 955,335 1058,290 1055,320 1085,325 1055,345 1078,360 1110,355 1060,375 1090,385 1110,300 1120,270 840,430 865,450 880,475 880,505 925,480 975,475 993,440 1000,455 1055,440 1050,470 1060,415 700,490 665,500 660,537 740,515 830,522 680,410 700,455 745,490 705,372 988,533 1000,490 1025,470 1085,440 1100,420 610,573 650,592 610,620 660,625 685,632 715,632 745,625 770,640 805,610 840,600 785,600 665,685 697,665 640,640 725,712 655,725 665,750 635,757 715,770 655,820 700,830 728,820 670,860 690,850 875,650 890,678 920,665 950,615 905,655 840,655 965,660 1000,685 1045,683 1115,608 985,725 1010,730 1040,730 1065,730 1087,735 1035,765 790,765 930,780 870,795 850,800 808,835 895,825 940,815 965,830 1020,830 1045,850 1017,862 1080,870 1110,800 1135,810 950,850 690,905 675,920 710,925 700,950 787,935 838,935 757,957 820,975 840,985 900,905 920,915 930,940 905,940 945,955 920,970 885,990 910,1000 940,995 940,930 1000,960 970,980 960,1010 1065,930 1130,880 1090,985 1115,960 1060,1020 1040,1040 1000,1030 980,1050 1090,1050 1120,1060 1010,910 1030,900 870,905 1060,900 1000,890 990,640 1020,600 820,705 760,660'],
  [WEST, '#7fcdbb', '780,533 853,510 918,540 935,558 920,575 1023,437 1027,525 1033,552 1010,582 1070,572 1065,515 1130,500 882,610 928,612 912,635 860,580 1050,637 1130,628 638,672 657,708 742,682 770,692 830,672 865,685 800,695 810,720 792,737 805,775 820,755 840,745 870,735 743,763 687,783 693,805 703,840 748,840 788,822 825,815 813,800 1087,715 1037,790 1065,803 1090,800 900,785 915,800 850,848 880,850 895,845 992,850 750,875 772,885 658,890 685,910 710,910 748,905 767,920 803,962 840,955 955,895 1105,898 1080,915 1010,920 1110,1000 995,990 1055,988 1115,990 1070,960 1140,745 930,1060 1080,1030 1130,1020'],
  [WEST, '#edf8b1', '701,5 785,15 820,10 843,18 790,52 778,72 803,77 773,103 843,93 860,40 855,22 873,60 905,55 890,15 940,20 965,45 965,75 985,20 1015,20 1040,15 1005,50 1030,45 1052,40 1085,25 1110,30 1130,20 1115,65 1085,70 1128,78 1070,108 1010,93 1045,75 865,118 900,80 885,135 910,118 935,130 938,155 960,115 950,90 980,165 1023,160 1095,135 1120,140 1135,150 1045,130 1020,120 1010,20 970,10 785,160 815,150 803,180 880,168 720,218 755,212 755,235 823,205 800,222 818,240 870,210 865,225 873,255 812,262 753,277 810,285 925,223 950,195 967,215 990,205 1000,228 1027,222 1020,200 1055,205 1080,215 1098,183 1060,235 985,240 1040,240 1100,210 1125,205 1135,230 1115,185 740,305 770,305 795,318 780,330 720,335 750,325 765,345 720,350 735,340 755,362 728,372 740,385 755,385 637,392 680,393 650,410 705,410 635,447 770,415 808,390 828,403 770,440 815,440 730,468 700,430 885,432 888,385 910,365 935,365 968,375 1003,350 885,325 895,300 840,335 630,525 763,605'],
  [WEST, '#c7e9b4', '945,60 1078,155 943,12 902,285'],
  [EAST, '#c7e9b4', '285,235 275,280 265,300 235,305 205,295 180,310 140,265 135,320 105,295 75,300 40,295 15,300 30,360 95,345 65,330 50,340 210,370 245,335 155,385 185,340 10,350 20,395 95,410 95,450 45,415 20,430 35,565 80,340 10,325 650,370 645,410 660,430 675,510 688,540 665,545 640,575 640,440 295,385 320,390 5,685 55,700 75,670 80,700 230,715 185,760 195,755 100,745 120,770 160,770 75,770 30,770 35,600 225,640 258,670 150,840 178,838 205,838 145,845 175,855 210,895 250,915 260,872 252,895 35,905 65,900 90,930 130,930 145,950 350,875 360,890 315,770 295,955 80,1000 95,1010 115,1035 130,1000 165,1040 205,1010 200,1035 235,1020 265,1020 310,1035 345,1040 360,1030 100,960 30,1040 20,885 45,870 405,625 425,1085 400,1075 505,1075 75,905 230,990 180,965'],
  [EAST, '#7fcdbb', '250,355 50,385 40,440 70,460 5,495 35,590 100,550 100,580 110,610 160,620 200,625 165,655 165,685 150,720 135,725 120,710 75,715 50,750 20,745 0,750 10,780 95,750 160,725 220,690 195,705 225,735 265,695 300,685 270,715 300,725 320,720 375,662 415,655 450,670 465,665 485,660 280,783 325,790 348,820 270,825 280,865 345,870 280,900 300,915 368,925 325,950 350,980 5,910 65,945 25,955 50,960 85,960 100,900 120,870 45,985 75,980 30,1010 80,1035 120,840 455,993 487,1015 530,1083 655,605 680,585 465,1085 450,1075 500,640'],
  [EAST, '#edf8b1', '10,150 15,60 30,35 45,15 25,80 68,40 100,20 75,75 45,110 60,125 12,95 5,25 20,100 75,20 85,50 45,50 115,90 100,75 100,128 128,33 165,40 155,20 190,25 195,60 215,65 220,95 250,70 268,35 220,110 195,125 240,135 265,120 205,155 228,160 250,155 297,168 290,135 185,140 165,140 170,95 130,155 118,180 45,190 15,222 50,222 60,245 90,218 120,218 155,205 183,190 140,195 165,220 210,222 265,195 235,180 377,12 367,45 362,83 415,30 415,65 462,27 400,122 370,155 425,100 465,85 435,118 505,72 487,130 425,187 518,150 550,165 515,185 580,162 578,95 575,20 313,205 320,240 307,270 335,275 365,222 380,265 322,300 350,330 320,355 355,352 370,380 393,310 443,310 490,215 430,255 480,255 520,250 500,270 490,290 490,345 455,385 500,375 530,345 545,330 548,355 575,265 600,245 585,212 568,228 617,265 635,233 607,220 600,280 610,300 635,305 645,325 660,340 600,385 575,385 525,385 10,275 75,265 65,250 85,260 120,300 155,298 168,285 205,262 235,265 285,1035 682,470'],
  [EAST, '#c7e9b4', '155,100 312,95 295,125 340,147 350,210 485,180 518,125 505,25 550,45 525,50 555,75 585,68 605,70 612,85 600,110 555,125 617,207 500,225 575,310 435,245 445,270 470,235'],
  [EAST, '#edf8b1', '585,115 490,215 430,258'],
  [EAST, '#c9cd8c', '645,520 642,490 642,468'],
  [EAST, '#41b6c4', '85,395 73,635 105,640 140,670 310,652 345,675 385,697 365,697 258,770 325,982 360,958 385,985 420,992 410,1030 435,1018 455,1020 385,1010 467,1058 145,915'],
  [EAST, '#1d91c0', '115,653 330,910 528,1035'],
  [EAST, '#41b6c4', '133,645'],
];
const stationLayer = document.getElementById('stations');
for (const [tile, fill, list] of stations)
  for (const pair of list.split(' ')) {
    const [x, y] = at(tile, ...pair.split(',').map(Number));
    add(stationLayer, 'circle', { class: 'station', cx: x, cy: y, r: 6, fill });
  }
add(stationLayer, 'circle', { class: 'station', cx: 819.5, cy: 274, r: 7, fill: '#08358f' });

// name, text x, baseline, marker x, marker y
const towns = [
  [WEST, [['Groningen',521,72,686,81],['Emmen',607,169,730,179],['Bremen',865,104,991,113],['Hannover',965,263,1118,272],['Amersfoort',349,311,525,321],['Enschede',571,315,730,306],['Rotterdam',231,363,399,372],['Utrecht',497,368,486,333],['Bielefeld',817,343,955,352],['Tilburg',370,444,483,453],['Hamm',865,416,855,426],['Paderborn',993,408,983,417],['Dortmund',649,452,808,462],['Essen',755,507,746,474],['Düsseldorf',547,515,714,525],['Antwerp',256,517,390,526],['Bruges',117,519,229,528],['Ghent',307,597,297,563],['Köln',665,577,738,588],['Solingen',765,577,756,537],['Aachen',500,613,620,623],['Bonn',768,665,758,632],['Kassel',978,497,1083,507],['Lille',139,644,208,654],['Mons',241,681,328,692],['Charleroi',404,735,396,701],['Dunkirk',-17,600,113,567],['Amiens',-18,802,102,811],['Frankfurt',829,723,974,765],['am Main',833,755],['Mainz',928,822,918,789],['Mannheim',781,888,945,897],['Heidelberg',985,955,975,914],['Saarbrücken',547,940,744,951],['Metz',641,1006,632,974],['Stuttgart',901,1035,1045,1048],['Reims',238,935,339,945],['Paris',28,1019,110,1029],['Strasbourg',675,1075,632,1062],['Reutlingen',875,1096,848,1086],['Nancy',530,1104],['Salzgitter',1047,330],['Caen',-345,955,-264,961],['Le Havre',-186,930],['Chartres',-144,1102]]],
  [EAST, [['Wolfsburg',131,252,121,261],['Berlin',382,230,477,240],['Potsdam',441,299,432,266],['Braunschweig',95,337,86,296],['Zielona Góra',566,360,766,369],['Leszno',799,381,912,390],['Göttingen',14,499,6,458],['Szczecin',499,23,636,33],['Gorzów Wielkopolski',738,182,729,192],['Poznań',844,255,961,264],['Bydgoszcz',941,93],['Wrocław',839,541,975,550],['Wałbrzych',708,615,872,625],['Częstochowa',1054,605],['Gliwice',1081,717],['Jena',237,628],['Chemnitz',422,643],['Carlsbad',265,730,406,741],['Prague',505,760,618,771],['Hradec Králové',820,735,810,744],['Pardubice',817,788,803,780],['Ostrava',1019,813],['Plzeň',387,833,475,843],['Würzburg',14,824,5,833],['Nürnberg',12,895,162,904],['Jihlava',670,907,777,917],['Brno',838,950,917,960],['Olomouc',1013,908,1004,875],['Zlín',1070,986,1061,951],['Regensburg',112,986,300,996],['Budweis',492,995,625,1005],['Trenčín',992,1056,1112,1021],['Ingolstadt',215,1092,207,1048]]],
];
const countries = [[WEST,'The Netherlands',436,255],[WEST,'Belgium',358,668],[WEST,'Luxembourg',522,843],[WEST,'Deutschland',1107,569],[EAST,'Czech Republic',635,843],[WEST,'Jersey',-555,970]];
const placeLayer = document.getElementById('places');
for (const [tile, name, tx, ty] of countries) {
  const [x, y] = at(tile, tx, ty);
  add(placeLayer, 'text', { class: 'place country', x, y }, name);
}
for (const [tile, list] of towns)
  for (const [name, tx, ty, mx, my] of list) {
    const [x, y] = at(tile, tx, ty);
    add(placeLayer, 'text', { class: 'place', x, y }, name);
    if (mx !== undefined) {
      const [sx, sy] = at(tile, mx, my);
      add(placeLayer, 'rect', { class: 'town', x: sx - 2.5, y: sy - 2.5, width: 5, height: 5 });
    }
  }

// Chart
const chart = document.getElementById('chart');
const left = 179.4, step = 8.12, base = 786.5, unit = 267;
const clip = add(chart, 'clipPath', { id: 'plot' });
add(clip, 'rect', { x: 179, y: 653, width: 585, height: 134 });
add(chart, 'rect', { x: 179, y: 653, width: 585, height: 134, fill: '#ededeb' });
add(chart, 'text', { class: 'title', x: 463, y: 645, 'text-anchor': 'middle' }, 'Messnetz = BfS');
add(chart, 'text', { class: 'title', transform: 'translate(138 725) rotate(-90)', 'text-anchor': 'middle' }, 'µSv/h');
for (let i = 0; i <= 10; i++) {
  const y = base - i * 0.05 * unit;
  add(chart, 'text', { x: 174, y: y + 4, 'text-anchor': 'end' }, (i * 0.05).toFixed(3));
  add(chart, 'path', { d: `M176 ${y}h3`, stroke: '#333' });
}
add(chart, 'path', { d: 'M179 787.500h585M179.500 787v3M763.500 787v3', stroke: '#777', fill: 'none' });
['Tue 06', '06:00', '12:00', '18:00', 'Wed 07', '06:00', '12:00', '18:00', 'Thu 08', '06:00', '12:00', '18:00'].forEach((label, i) => {
  const x = left + step * (2 + 6 * i);
  add(chart, 'path', { d: `M${x} 787v3`, stroke: '#333' });
  add(chart, 'text', { transform: `translate(${x} 799) rotate(-55)`, 'text-anchor': 'end' }, label);
});
const levels = {
  '#f39200': '185 185 187 190 191 191 193 196 200 190 198 203 191 190 186 185 184 181 183 184 185 187 185 181 187 183 188 186 186 190 187 190 189 187 187 186 185 187 186 187 184 185 187 190 193 188 187 184 186 183 184 186 188 190 184 186 183 184 182 185 184 184 185 187 184 188 187 185 186 185 184 184 185',
  '#65b32e': '110 111 111 113 111 111 109 112 112 113 113 112 111 111 109 112 113 110 114 109 114 118 117 113 111 110 113 110 110 110 111 114 112 112 113 109 110 113 112 110 113 111 112 110 114 112 110 109 111 112 110 111 110 112 111 113 111 110 112 112 111 109 111 112 111 113 115 117 111 110 119 110 112',
  '#312783': '41 42 42 42 41 38 39 41 40 41 42 40 39 41 40 41 41 40 41 43 41 40 41 42 40 44 41 42 40 42 41 40 41 42 41 39 42 44 42 40 41 41 42 41 43 42 41 43 41 40 42 41 43 41 42 40 41 41 40 42 41 40 41 40 41 42 40 43 41 40 40 42 41',
};
const plot = add(chart, 'g', { 'clip-path': 'url(#plot)' });
for (const color in levels) {
  const pts = levels[color].split(' ').map((v, i) => [left + step * i, base - v / 1000 * unit]);
  add(plot, 'polyline', { points: pts.join(' '), fill: 'none', stroke: color, 'stroke-width': 2 });
  for (const [cx, cy] of pts) add(plot, 'circle', { cx, cy, r: 4.8, fill: color });
}
```
